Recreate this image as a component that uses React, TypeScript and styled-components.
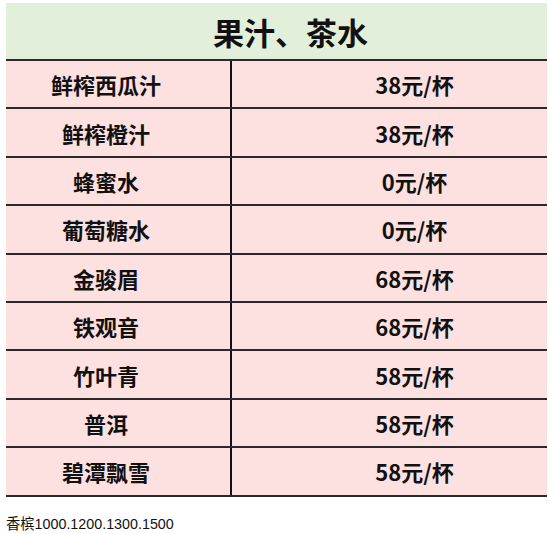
import React from 'react';
import styled, { createGlobalStyle } from 'styled-components';

const GlobalStyle = createGlobalStyle`
  html, body {
    margin: 0;
    padding: 0;
    background: #ffffff;
  }
  body {
    font-family: "Liberation Sans", "Noto Sans CJK SC", sans-serif;
    color: #111;
  }
`;

const Page = styled.div`
  padding: 3px 2px 0 6px;
  width: 549px;
  box-sizing: border-box;
`;

const Sheet = styled.div`
  width: 541px;
  display: flex;
  flex-direction: column;
  font-family: "Noto Sans CJK SC", "Noto Sans", sans-serif;
`;

const Title = styled.div`
  height: 56px;
  background: #e2efda;
  border-bottom: 2px solid #2a2a2a;
  display: flex;
  align-items: center;
  justify-content: center;
  padding-left: 28px;
  font-size: 31px;
  font-weight: 700;
  color: #111;
`;

const Row = styled.div`
  display: grid;
  grid-template-columns: 226px 1fr;
  height: 48.4px;
  box-sizing: border-box;
  background: #fde0e0;
  border-bottom: 2px solid #2a2a2a;
`;

const Cell = styled.div<{ $shift: number }>`
  display: flex;
  align-items: center;
  justify-content: center;
  font-size: 22px;
  font-weight: 700;
  color: #111;
  padding-left: ${p => (p.$shift > 0 ? p.$shift : 0)}px;
  padding-right: ${p => (p.$shift < 0 ? -p.$shift : 0)}px;
`;

const NameCell = styled(Cell)`
  border-right: 2px solid #111;
`;

const Note = styled.div`
  margin-top: 15px;
  font-family: "Liberation Sans", "Noto Sans CJK SC", sans-serif;
  font-size: 14.3px;
  color: #111;
`;

const items = [
  { name: '鲜榨西瓜汁', price: '38元/杯' },
  { name: '鲜榨橙汁', price: '38元/杯' },
  { name: '蜂蜜水', price: '0元/杯' },
  { name: '葡萄糖水', price: '0元/杯' },
  { name: '金骏眉', price: '68元/杯' },
  { name: '铁观音', price: '68元/杯' },
  { name: '竹叶青', price: '58元/杯' },
  { name: '普洱', price: '58元/杯' },
  { name: '碧潭飘雪', price: '58元/杯' },
];

const App: React.FC = () => {
  return (
    <>
      <GlobalStyle />
      <Page>
        <Sheet>
          <Title>果汁、茶水</Title>
          {items.map(item => (
            <Row key={item.name}>
              <NameCell $shift={-24}>{item.name}</NameCell>
              <Cell $shift={50}>{item.price}</Cell>
            </Row>
          ))}
        </Sheet>
        <Note>香槟1000.1200.1300.1500</Note>
      </Page>
    </>
  );
};

export default App;
